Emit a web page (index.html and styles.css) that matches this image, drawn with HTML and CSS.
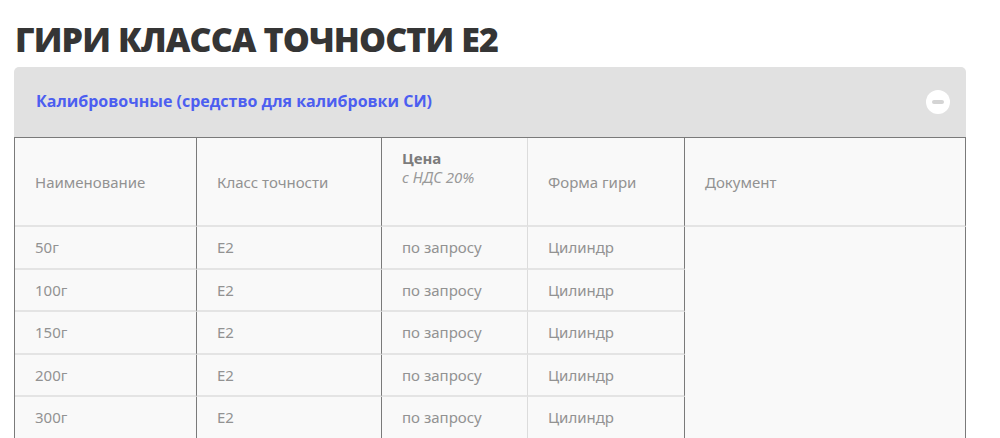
FILE: index.html
```html
<!DOCTYPE html>
<html lang="ru">
<head>
<meta charset="utf-8">
<link rel="stylesheet" href="styles.css">
</head>
<body>
<div class="page">
  <h1 class="title">ГИРИ КЛАССА ТОЧНОСТИ Е2</h1>
  <section class="acc">
    <div class="acc-head">
      <span class="acc-title">Калибровочные (средство для калибровки СИ)</span>
      <span class="acc-toggle"><span class="minus"></span></span>
    </div>
    <table class="tbl">
      <colgroup>
        <col class="c1"><col class="c2"><col class="c3"><col class="c4"><col class="c5">
      </colgroup>
      <thead>
        <tr>
          <th class="dark">Наименование</th>
          <th class="dark">Класс точности</th>
          <th class="price light"><b>Цена</b><br><i>с НДС 20%</i></th>
          <th class="dark">Форма гири</th>
          <th class="dark">Документ</th>
        </tr>
      </thead>
      <tbody>
        <tr><td class="dark">50г</td><td class="dark">Е2</td><td class="light">по запросу</td><td class="dark">Цилиндр</td><td class="doc dark" rowspan="5"></td></tr>
        <tr><td class="dark">100г</td><td class="dark">Е2</td><td class="light">по запросу</td><td class="dark">Цилиндр</td></tr>
        <tr><td class="dark">150г</td><td class="dark">Е2</td><td class="light">по запросу</td><td class="dark">Цилиндр</td></tr>
        <tr><td class="dark">200г</td><td class="dark">Е2</td><td class="light">по запросу</td><td class="dark">Цилиндр</td></tr>
        <tr><td class="dark">300г</td><td class="dark">Е2</td><td class="light">по запросу</td><td class="dark">Цилиндр</td></tr>
      </tbody>
    </table>
  </section>
</div>
</body>
</html>
```
FILE: styles.css
```css
html, body {
  margin: 0;
  padding: 0;
  background: #ffffff;
}
.page {
  padding: 20px 34px 0 14px;
  font-family: "Noto Sans", "Open Sans", sans-serif;
}
.title {
  margin: 0 0 9px 1px;
  font-family: "Open Sans", sans-serif;
  font-weight: 800;
  font-size: 34px;
  line-height: 38px;
  color: #353535;
  letter-spacing: -0.9px;
}
.acc {
  width: 952px;
}
.acc-head {
  background: #e1e1e1;
  border-radius: 5px 5px 0 0;
  height: 70px;
  display: flex;
  align-items: center;
  justify-content: space-between;
  padding: 0 16px 0 22px;
  box-sizing: border-box;
}
.acc-title {
  font-family: "Open Sans", sans-serif;
  font-weight: 700;
  font-size: 16px;
  color: #4c5ef0;
  margin-top: -3px;
}
.acc-toggle {
  width: 24px;
  height: 24px;
  border-radius: 50%;
  background: #ffffff;
  display: flex;
  align-items: center;
  justify-content: center;
}
.minus {
  width: 12px;
  height: 4px;
  border-radius: 2px;
  background: #d4d4d4;
}
.tbl {
  width: 952px;
  table-layout: fixed;
  border-collapse: separate;
  border-spacing: 0;
  background: #f9f9f9;
  border-left: 1px solid #7a7a7a;
  border-top: 1px solid #7a7a7a;
  color: #929292;
  font-size: 15px;
}
.c1 { width: 182px; }
.c2 { width: 185px; }
.c3 { width: 146px; }
.c4 { width: 157px; }
.c5 { width: 281px; }
.tbl th, .tbl td {
  text-align: left;
  font-weight: 400;
  padding: 0 0 0 20px;
  vertical-align: middle;
  box-sizing: border-box;
}
.tbl th {
  height: 89px;
  border-bottom: 2px solid #e4e4e4;
}
.tbl td {
  height: 42.5px;
  border-bottom: 2px solid #e4e4e4;
}
.tbl .dark { border-right: 1px solid #7a7a7a; }
.tbl .light { border-right: 1px solid #dcdcdc; }
.tbl .price {
  vertical-align: top;
  padding-top: 11px;
  line-height: 19px;
}
.price b {
  font-weight: 700;
  color: #7c7c7c;
}
.price i {
  font-style: italic;
  color: #9a9a9a;
}
.tbl .doc {
  border-bottom: none;
}
```
